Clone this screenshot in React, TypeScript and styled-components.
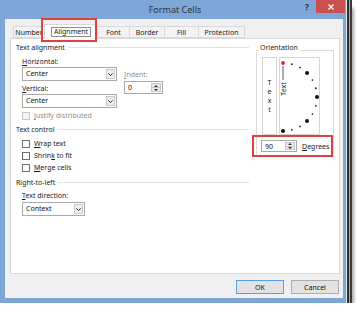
import styled, { createGlobalStyle } from 'styled-components';

const GlobalStyle = createGlobalStyle`
  html, body {
    margin: 0;
    padding: 0;
    background: #ffffff;
  }
  body {
    font-family: "Noto Sans", "Open Sans", sans-serif;
    font-size: 7px;
    color: #1a1a1a;
  }
`;

const Frame = styled.div`
  position: relative;
  width: 346px;
  height: 303px;
  box-sizing: border-box;
  display: flex;
  flex-direction: column;
  background: #7ea7d8;
  box-shadow: 1px 0 0 #e4eaf1, 0 1px 0 #e4eaf1, 1px 1px 0 #e4eaf1,
    3px 0 0 #2e2e2e, 0 3px 0 #2e2e2e, 3px 3px 0 #2e2e2e,
    4px 0 0 #a8a8a8, 0 4px 0 #a8a8a8, 4px 4px 0 #a8a8a8,
    6px 0 0 #3a3a3a, 0 6px 0 #3a3a3a, 6px 6px 0 #3a3a3a,
    8px 8px 3px rgba(0, 0, 0, 0.35);
`;

const TitleBar = styled.div`
  height: 19px;
  flex: none;
  display: grid;
  grid-template-columns: 1fr auto 1fr;
  padding: 0 1px 0 5px;
`;

const Title = styled.div`
  line-height: 19px;
  font-size: 9px;
  color: #2e3440;
`;

const TitleButtons = styled.div`
  display: flex;
  justify-content: flex-end;
  align-items: flex-start;
`;

const HelpButton = styled.div`
  width: 10px;
  height: 13px;
  margin-right: 4px;
  line-height: 14px;
  text-align: center;
  font-size: 8px;
  font-weight: 700;
  color: #1f2a38;
`;

const CloseButton = styled.div`
  width: 29px;
  height: 13px;
  background: #c9504f;
  display: flex;
  align-items: center;
  justify-content: center;
`;

const Client = styled.div`
  flex: 1;
  display: flex;
  flex-direction: column;
  margin: 0 3px 5px 5px;
  padding: 5px 3px 4px 4px;
  background: #f0f0f0;
  border-left: 1px solid #e8eef6;
  box-sizing: border-box;
`;

const TabStrip = styled.div`
  display: flex;
  align-items: flex-end;
  height: 14px;
  margin-left: 3px;
  position: relative;
  z-index: 1;
`;

const Tab = styled.div<{ $width: number; $active?: boolean }>`
  width: ${(p) => p.$width}px;
  height: ${(p) => (p.$active ? 15 : 12)}px;
  margin-left: -1px;
  margin-bottom: ${(p) => (p.$active ? -1 : 0)}px;
  box-sizing: border-box;
  border: 1px solid #d9d9d9;
  border-bottom: ${(p) => (p.$active ? 'none' : '1px solid #d9d9d9')};
  background: ${(p) => (p.$active ? '#ffffff' : '#f3f3f3')};
  display: flex;
  align-items: center;
  justify-content: center;
  overflow: hidden;
  white-space: nowrap;
  color: #222;
  &:first-child {
    margin-left: 0;
  }
`;

const FocusRing = styled.span`
  border: 1px solid #8d8d8d;
  padding: 0 2px;
  line-height: 8px;
`;

const Panel = styled.div`
  flex: 1;
  display: flex;
  gap: 7px;
  padding: 4px 5px 0 5px;
  background: #ffffff;
  border: 1px solid #d9d9d9;
`;

const LeftColumn = styled.div`
  flex: 1;
  display: flex;
  flex-direction: column;
`;

const SectionHeader = styled.div<{ $gap?: number }>`
  display: flex;
  align-items: center;
  height: 9px;
  line-height: 9px;
  margin-top: ${(p) => p.$gap ?? 0}px;
  color: #1a1a1a;
  &::after {
    content: '';
    flex: 1;
    height: 1px;
    margin-left: 3px;
    background: #e2e2e2;
  }
`;

const Indented = styled.div`
  margin-left: 6px;
  display: flex;
  flex-direction: column;
`;

const Label = styled.div<{ $gap?: number; $disabled?: boolean }>`
  height: 9px;
  line-height: 9px;
  margin-top: ${(p) => p.$gap ?? 0}px;
  color: ${(p) => (p.$disabled ? '#8f8f8f' : '#1a1a1a')};
  white-space: nowrap;
`;

const Key = styled.u`
  text-decoration-thickness: 0.5px;
  text-underline-offset: 1px;
`;

const AlignRow = styled.div`
  display: flex;
  gap: 7px;
  margin-top: 5px;
`;

const Stack = styled.div<{ $gap?: number }>`
  display: flex;
  flex-direction: column;
  margin-top: ${(p) => p.$gap ?? 0}px;
`;

const Combo = styled.div<{ $width: number; $gap?: number }>`
  width: ${(p) => p.$width}px;
  height: 14px;
  margin-top: ${(p) => p.$gap ?? 0}px;
  box-sizing: border-box;
  border: 1px solid #a9a9a9;
  background: #ffffff;
  display: flex;
  align-items: stretch;
`;

const ComboText = styled.div`
  flex: 1;
  padding-left: 3px;
  line-height: 12px;
  color: #111;
`;

const DropButton = styled.div`
  width: 9px;
  margin: 1px;
  box-sizing: border-box;
  border: 1px solid #c9c9c9;
  background: #eeeeee;
  display: flex;
  align-items: center;
  justify-content: center;
`;

const Spinner = styled.div<{ $width: number; $height: number; $gap?: number }>`
  width: ${(p) => p.$width}px;
  height: ${(p) => p.$height}px;
  margin-top: ${(p) => p.$gap ?? 0}px;
  box-sizing: border-box;
  border: 1px solid #a9a9a9;
  background: #ffffff;
  display: flex;
`;

const SpinValue = styled.div`
  flex: 1;
  padding-left: 3px;
  display: flex;
  align-items: center;
  color: #111;
`;

const SpinButtons = styled.div`
  width: 8px;
  margin: 1px;
  display: flex;
  flex-direction: column;
  border: 1px solid #c9c9c9;
  background: #e9e9e9;
`;

const SpinHalf = styled.div`
  flex: 1;
  display: flex;
  align-items: center;
  justify-content: center;
  & + & {
    border-top: 1px solid #c9c9c9;
  }
`;

const CheckRow = styled.div<{ $gap?: number; $disabled?: boolean }>`
  display: flex;
  align-items: center;
  gap: 4px;
  height: 9px;
  margin-top: ${(p) => p.$gap ?? 0}px;
  color: ${(p) => (p.$disabled ? '#8f8f8f' : '#1a1a1a')};
  white-space: nowrap;
`;

const CheckBox = styled.div<{ $disabled?: boolean }>`
  width: 8px;
  height: 8px;
  box-sizing: border-box;
  border: 1px solid ${(p) => (p.$disabled ? '#c8c8c8' : '#6f6f6f')};
  background: ${(p) => (p.$disabled ? '#f4f4f4' : '#ffffff')};
`;

const Group = styled.div`
  width: 78px;
  display: flex;
  flex-direction: column;
`;

const Legend = styled.div`
  align-self: flex-start;
  position: relative;
  z-index: 1;
  height: 9px;
  line-height: 9px;
  margin: 0 0 -2px 3px;
  padding: 0 1px;
  background: #ffffff;
`;

const GroupBody = styled.div`
  border: 1px solid #dcdcdc;
  padding: 6px 0 4px 5px;
  display: flex;
  flex-direction: column;
`;

const DialRow = styled.div`
  display: flex;
  gap: 2px;
`;

const StackedText = styled.div`
  width: 15px;
  height: 78px;
  box-sizing: border-box;
  border: 1px solid #d5d5d5;
  display: flex;
  flex-direction: column;
  align-items: center;
  justify-content: center;
  line-height: 9px;
  color: #222;
`;

const DialBox = styled.div`
  width: 41px;
  height: 78px;
  box-sizing: border-box;
  border: 1px solid #d5d5d5;
  display: flex;
`;

const DegreeRow = styled.div`
  display: flex;
  align-items: center;
  gap: 5px;
  margin: 5px 0 0 -1px;
`;

const ButtonRow = styled.div`
  display: flex;
  justify-content: flex-end;
  gap: 7px;
  margin: 6px 1px 0 0;
`;

const DialogButton = styled.div<{ $default?: boolean }>`
  width: 48px;
  height: 14px;
  box-sizing: border-box;
  border: 1px solid ${(p) => (p.$default ? '#5aa0e0' : '#adadad')};
  background: #e3e3e3;
  display: flex;
  align-items: center;
  justify-content: center;
  color: #111;
`;

const Callout = styled.div<{ $x: number; $y: number; $w: number; $h: number }>`
  position: absolute;
  left: ${(p) => p.$x}px;
  top: ${(p) => p.$y}px;
  width: ${(p) => p.$w}px;
  height: ${(p) => p.$h}px;
  box-sizing: border-box;
  border: 2px solid #e2403f;
  z-index: 5;
`;

function Chevron() {
  return (
    <svg width="5" height="3" viewBox="0 0 5 3">
      <path d="M0.3 0.3 L2.5 2.6 L4.7 0.3" fill="none" stroke="#333" strokeWidth="1" />
    </svg>
  );
}

function Arrow({ up }: { up?: boolean }) {
  return (
    <svg width="4" height="2" viewBox="0 0 4 2">
      <path d={up ? 'M0 2 L2 0 L4 2 Z' : 'M0 0 L2 2 L4 0 Z'} fill="#333" />
    </svg>
  );
}

function Spin({ value, width, height, gap }: { value: string; width: number; height: number; gap?: number }) {
  return (
    <Spinner $width={width} $height={height} $gap={gap}>
      <SpinValue>{value}</SpinValue>
      <SpinButtons>
        <SpinHalf>
          <Arrow up />
        </SpinHalf>
        <SpinHalf>
          <Arrow />
        </SpinHalf>
      </SpinButtons>
    </Spinner>
  );
}

function Dial() {
  const cx = 3;
  const cy = 39;
  const r = 34;
  const dots = [];
  for (let a = -90; a <= 75; a += 15) {
    const rad = (a * Math.PI) / 180;
    const big = a % 45 === 0;
    dots.push(
      <circle
        key={a}
        cx={cx + r * Math.cos(rad)}
        cy={cy - r * Math.sin(rad)}
        r={big ? 2 : 0.85}
        fill="#111"
      />
    );
  }
  return (
    <svg width="39" height="76" viewBox="0 0 39 76">
      {dots}
      <line x1={cx} y1={8} x2={cx} y2={22} stroke="#8a8a8a" strokeWidth="1.4" />
      <text
        x={cx}
        y={31}
        transform={`rotate(-90 ${cx} 31)`}
        textAnchor="middle"
        dominantBaseline="central"
        fontSize="7"
        fontFamily="Noto Sans, sans-serif"
        fill="#222"
      >
        Text
      </text>
      <circle cx={cx} cy={cy - r} r={1.9} fill="#d8262a" />
    </svg>
  );
}

export default function App() {
  return (
    <>
      <GlobalStyle />
      <Frame>
        <TitleBar>
          <div />
          <Title>Format Cells</Title>
          <TitleButtons>
            <HelpButton>?</HelpButton>
            <CloseButton>
              <svg width="6" height="6" viewBox="0 0 6 6">
                <path d="M0.5 0.5 L5.5 5.5 M5.5 0.5 L0.5 5.5" stroke="#fff" strokeWidth="1.3" />
              </svg>
            </CloseButton>
          </TitleButtons>
        </TitleBar>

        <Client>
          <TabStrip>
            <Tab $width={32}>Number</Tab>
            <Tab $width={54} $active>
              <FocusRing>Alignment</FocusRing>
            </Tab>
            <Tab $width={33}>Font</Tab>
            <Tab $width={36}>Border</Tab>
            <Tab $width={35}>Fill</Tab>
            <Tab $width={47}>Protection</Tab>
          </TabStrip>

          <Panel>
            <LeftColumn>
              <SectionHeader>Text alignment</SectionHeader>
              <Indented>
                <AlignRow>
                  <Stack>
                    <Label>
                      <Key>H</Key>orizontal:
                    </Label>
                    <Combo $width={95} $gap={1}>
                      <ComboText>Center</ComboText>
                      <DropButton>
                        <Chevron />
                      </DropButton>
                    </Combo>
                    <Label $gap={3}>
                      <Key>V</Key>ertical:
                    </Label>
                    <Combo $width={95} $gap={1}>
                      <ComboText>Center</ComboText>
                      <DropButton>
                        <Chevron />
                      </DropButton>
                    </Combo>
                  </Stack>
                  <Stack $gap={13}>
                    <Label $disabled>
                      <Key>I</Key>ndent:
                    </Label>
                    <Spin value="0" width={39} height={13} gap={2} />
                  </Stack>
                </AlignRow>
                <CheckRow $gap={3} $disabled>
                  <CheckBox $disabled />
                  <span>
                    <Key>J</Key>ustify distributed
                  </span>
                </CheckRow>
              </Indented>

              <SectionHeader $gap={5}>Text control</SectionHeader>
              <Indented>
                <CheckRow $gap={5}>
                  <CheckBox />
                  <span>
                    <Key>W</Key>rap text
                  </span>
                </CheckRow>
                <CheckRow $gap={3}>
                  <CheckBox />
                  <span>
                    Shrin<Key>k</Key> to fit
                  </span>
                </CheckRow>
                <CheckRow $gap={3}>
                  <CheckBox />
                  <span>
                    <Key>M</Key>erge cells
                  </span>
                </CheckRow>
              </Indented>

              <SectionHeader $gap={6}>Right-to-left</SectionHeader>
              <Indented>
                <Label $gap={4}>
                  <Key>T</Key>ext direction:
                </Label>
                <Combo $width={63} $gap={2}>
                  <ComboText>Context</ComboText>
                  <DropButton>
                    <Chevron />
                  </DropButton>
                </Combo>
              </Indented>
            </LeftColumn>

            <Group>
              <Legend>Orientation</Legend>
              <GroupBody>
                <DialRow>
                  <StackedText>
                    <span>T</span>
                    <span>e</span>
                    <span>x</span>
                    <span>t</span>
                  </StackedText>
                  <DialBox>
                    <Dial />
                  </DialBox>
                </DialRow>
                <DegreeRow>
                  <Spin value="90" width={36} height={12} />
                  <span>
                    <Key>D</Key>egrees
                  </span>
                </DegreeRow>
              </GroupBody>
            </Group>
          </Panel>

          <ButtonRow>
            <DialogButton $default>OK</DialogButton>
            <DialogButton>Cancel</DialogButton>
          </ButtonRow>
        </Client>

        <Callout $x={41} $y={18} $w={56} $h={24} />
        <Callout $x={252} $y={135} $w={81} $h={22} />
      </Frame>
    </>
  );
}
